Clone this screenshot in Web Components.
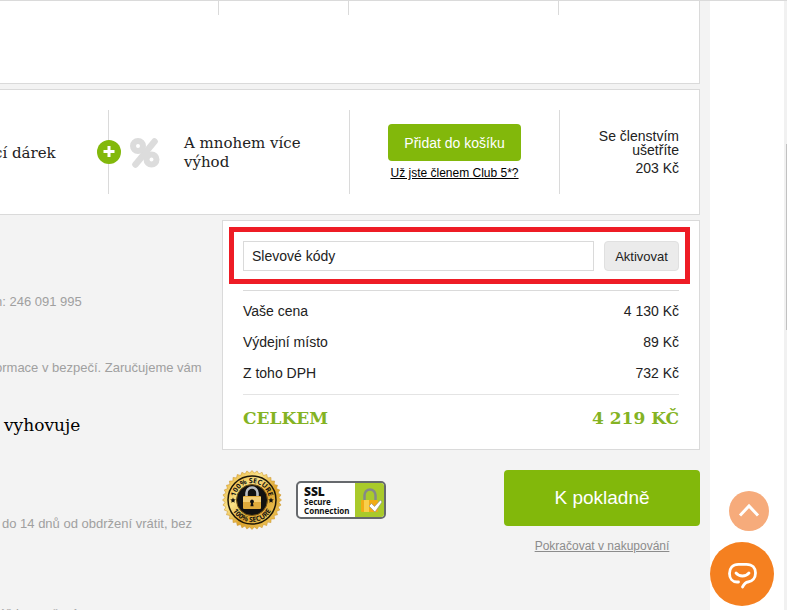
<!DOCTYPE html>
<html lang="cs">
<head>
<meta charset="utf-8">
<title>Košík</title>
<style>
body {
  margin: 0;
  font: 14px/14px "Liberation Sans", Arial, sans-serif;
  color: #222;
  --green: #82b80b;
  --line: #dadada;
  --slab: "Roboto Slab", "DejaVu Serif", serif;
}
</style>
</head>
<body>
<cart-page>
  <shipping-strip></shipping-strip>
  <club-strip>
    <span slot="gift">cí dárek</span>
    <span slot="more">A mnohem více výhod</span>
  </club-strip>
  <help-notes slot="side"></help-notes>
  <cart-summary slot="main"></cart-summary>
  <cart-actions slot="main"></cart-actions>
</cart-page>
<floating-tools></floating-tools>

<script>
class BaseElement extends HTMLElement {
  constructor() {
    super();
    this.shadow = this.attachShadow({ mode: "open" });
  }

  connectedCallback() {
    const tmpl = document.createElement("template");
    tmpl.innerHTML = `<style>* { box-sizing: border-box; }</style>${this.template()}`;
    this.shadow.replaceChildren(tmpl.content.cloneNode(true));
  }
}

class CartPage extends BaseElement {
  template() {
    return `
<style>
:host {
  display: flex;
  height: 100vh;
  overflow: hidden;
  border-top: 1px solid var(--line);
  box-sizing: border-box;
}
main {
  flex: 1;
  min-width: 0;
  padding-right: 10px;
  background: #f3f3f3;
}
.columns {
  display: grid;
  grid-template-columns: minmax(0, 1fr) 478px;
  margin-top: 5px;
}
.gutter {
  width: 74px;
  background: #fff;
}
.track {
  width: 3px;
  padding: 143px 0 0 2px;
  background: #f1f1f1;
}
.thumb {
  height: 186px;
  background: #c1c1c1;
}
</style>
<main>
  <slot></slot>
  <div class="columns">
    <div><slot name="side"></slot></div>
    <div><slot name="main"></slot></div>
  </div>
</main>
<div class="gutter"></div>
<div class="track"><div class="thumb"></div></div>`;
  }
}

class ShippingStrip extends BaseElement {
  template() {
    return `
<style>
:host {
  display: grid;
  grid-template-columns: 1fr 130px 210px 141px;
  height: 83px;
  background: #fff;
  border: solid var(--line);
  border-width: 0 1px 1px 0;
  box-sizing: border-box;
}
i {
  height: 14px;
  border-left: 1px solid var(--line);
}
i:first-of-type {
  border: 0;
}
</style>
<i></i><i></i><i></i><i></i>`;
  }
}

class ClubStrip extends BaseElement {
  template() {
    return `
<style>
:host {
  display: grid;
  grid-template-columns: minmax(0, 1fr) 241px 210px 140px;
  margin-top: 5px;
  padding: 20px 0;
  background: #fff;
  border: 1px solid var(--line);
  border-left: 0;
}
.cell {
  display: flex;
  align-items: center;
  height: 84px;
  border-left: 1px solid var(--line);
  font-size: 14px;
}
.cell.gift {
  border: 0;
  margin-left: -6px;
  padding-top: 2px;
  white-space: nowrap;
}
.slab {
  font: 15px/19px var(--slab);
}
.more {
  position: relative;
  gap: 24px;
  padding: 2px 24px 0 21px;
}
.plus {
  position: absolute;
  left: -12px;
  top: 30px;
}
.percent {
  flex: none;
}
.join {
  flex-direction: column;
  justify-content: center;
  gap: 5px;
}
button {
  height: 37px;
  padding: 0 16px;
  border: 0;
  border-radius: 4px;
  background: var(--green);
  color: #fff;
  font: inherit;
}
a {
  color: #000;
  font-size: 12px;
}
.saving {
  flex-direction: column;
  align-items: flex-end;
  justify-content: center;
  gap: 4px;
  padding-right: 20px;
  text-align: right;
}
</style>
<div class="cell slab gift"><slot name="gift"></slot></div>
<div class="cell slab more">
  <svg class="plus" width="24" height="24" viewBox="0 0 24 24">
    <circle cx="12" cy="12" r="12" fill="#82b80b"/>
    <path d="M12 6v11M6.500 11.500h11" stroke="#fff" stroke-width="3"/>
  </svg>
  <svg class="percent" width="30" height="30" viewBox="0 0 30 30" fill="none" stroke="#dcdcdc">
    <path d="M24.500 3.500 5.500 26.500" stroke-width="6.500" stroke-linecap="round"/>
    <circle cx="8" cy="8" r="5" stroke-width="6"/>
    <circle cx="21.500" cy="21.500" r="5" stroke-width="6"/>
  </svg>
  <slot name="more"></slot>
</div>
<div class="cell join">
  <button type="button">Přidat do košíku</button>
  <a href="#club">Už jste členem Club 5*?</a>
</div>
<div class="cell saving">
  <span>Se členstvím<br>ušetříte</span>
  <span>203 Kč</span>
</div>`;
  }
}

class HelpNotes extends BaseElement {
  template() {
    return `
<style>
:host {
  display: block;
  margin-left: -5px;
  padding-top: 74px;
  color: #a0a0a0;
  font-size: 13px;
  line-height: 16px;
  white-space: nowrap;
}
p, h3 {
  margin: 0 0 50px;
}
h3 {
  margin: 0 0 81px;
  padding-left: 9px;
  color: #000;
  font: 17px/20px var(--slab);
}
.phone + p {
  margin-bottom: 39px;
}
h3 + p {
  padding-left: 7px;
  margin-bottom: 74px;
}
</style>
<p class="phone">n: 246 091 995</p>
<p>ormace v bezpečí. Zaručujeme vám</p>
<h3>vyhovuje</h3>
<p>do 14 dnů od obdržení vrátit, bez</p>
<p>též bez určení</p>`;
  }
}

class CartSummary extends BaseElement {
  rows = [
    ["Vaše cena", "4 130 Kč"],
    ["Výdejní místo", "89 Kč"],
    ["Z toho DPH", "732 Kč"],
  ];

  template() {
    return `
<style>
:host {
  display: block;
  padding: 6px 0 8px;
  background: #fff;
  border: 1px solid var(--line);
}
form {
  display: flex;
  gap: 10px;
  margin: 0 9px 0 6px;
  padding: 9px 6px 8px 9px;
  border: 5px solid #ee1c25;
}
input {
  flex: 1;
  min-width: 0;
  height: 30px;
  padding: 0 8px;
  border: 1px solid var(--line);
  background: #fff;
  color: #222;
  font: inherit;
}
input::placeholder {
  color: #222;
}
button {
  width: 75px;
  height: 30px;
  padding: 0;
  border: 1px solid #e0e0e0;
  border-radius: 4px;
  background: #ebebeb;
  color: #222;
  font: 13px "Liberation Sans", Arial, sans-serif;
}
.prices {
  margin: 6px 20px 0;
  padding-top: 4px;
  border-top: 1px solid var(--line);
}
table {
  width: 100%;
  border-collapse: collapse;
}
th, td {
  height: 31px;
  padding: 0;
  font-size: 14px;
  font-weight: normal;
  text-align: left;
}
td {
  text-align: right;
}
.total {
  display: flex;
  justify-content: space-between;
  align-items: center;
  height: 47px;
  margin-top: 6px;
  border-top: 1px solid #e4e4e4;
  color: #84b323;
  font: bold 17px/24px var(--slab);
}
</style>
<form>
  <input type="text" aria-label="Slevové kódy" placeholder="Slevové kódy">
  <button type="button">Aktivovat</button>
</form>
<div class="prices">
  <table>
    ${this.rows
      .map(([label, price]) => `<tr><th scope="row">${label}</th><td>${price}</td></tr>`)
      .join("\n")}
  </table>
  <div class="total"><span>CELKEM</span><span>4 219 KČ</span></div>
</div>`;
  }
}

class SecureSeal extends BaseElement {
  // Points of the toothed outer rim
  rim(teeth) {
    return Array.from({ length: teeth * 2 }, (_, i) => {
      const r = i % 2 ? 27 : 29.5;
      const a = (i * Math.PI) / teeth;
      return `${(30 + r * Math.cos(a)).toFixed(2)},${(30 + r * Math.sin(a)).toFixed(2)}`;
    }).join(" ");
  }

  template() {
    return `
<style>
:host {
  display: block;
}
svg {
  display: block;
}
text {
  font: bold 7px "Noto Sans", sans-serif;
}
</style>
<svg width="60" height="60" viewBox="0 0 60 60" role="img" aria-label="100% Secure">
  <defs>
    <linearGradient id="gold" x1="0" y1="0" x2="1" y2="1">
      <stop offset="0" stop-color="#e2a92c"/>
      <stop offset=".35" stop-color="#fbe389"/>
      <stop offset=".6" stop-color="#dca32c"/>
      <stop offset="1" stop-color="#f3cf68"/>
    </linearGradient>
    <path id="top" d="M13 30a17 17 0 0 1 34 0"/>
    <path id="bottom" d="M8 30a22 22 0 0 0 44 0"/>
  </defs>
  <polygon points="${this.rim(36)}" fill="url(#gold)" stroke="#c98f22" stroke-width=".5"/>
  <circle cx="30" cy="30" r="24" fill="url(#gold)" stroke="#1c1608" stroke-width="1.500"/>
  <circle cx="30" cy="30" r="15.500" fill="#111" stroke="#7a5714"/>
  <text fill="#111" text-anchor="middle"><textPath href="#top" startOffset="50%">100% SECURE</textPath></text>
  <text fill="#111" text-anchor="middle"><textPath href="#bottom" startOffset="50%">100% SECURE</textPath></text>
  <path id="star" d="M11 27.500l.8 1.800 2 .2-1.500 1.300.4 2-1.700-1-1.700 1 .4-2-1.500-1.300 2-.2zM49 27.500l.8 1.800 2 .2-1.500 1.300.4 2-1.700-1-1.700 1 .4-2-1.500-1.300 2-.2z" fill="#111"/>
  <path d="M24.500 27v-4a5.500 5.500 0 0 1 11 0v4" fill="none" stroke="#b9bcc0" stroke-width="2.600"/>
  <rect x="21" y="26" width="18" height="13" rx="1" fill="#e0ab3c"/>
  <path d="M21 27h18v5H21z" fill="#f4cf76"/>
  <path d="M30 29.500a2 2 0 0 1 1 3.700l.6 3h-3.200l.6-3a2 2 0 0 1 1-3.700z" fill="#111"/>
</svg>`;
  }
}

class SslBadge extends BaseElement {
  template() {
    return `
<style>
:host {
  display: flex;
  width: 90px;
  height: 38px;
  box-sizing: border-box;
  border: 2px solid #66696d;
  border-radius: 5px;
  overflow: hidden;
  background: #fff;
  color: #111;
}
div {
  flex: 1;
  padding: 3px 0 0 6px;
  font: bold 8px/9px "Noto Sans", sans-serif;
  white-space: nowrap;
}
b {
  display: block;
  font-size: 12px;
  line-height: 11px;
}
svg {
  flex: none;
  background: #a9ca2b;
}
</style>
<div><b>SSL</b>Secure<br>Connection</div>
<svg width="29" height="34" viewBox="0 0 29 34">
  <path d="M9.500 18v-6a5.500 5.500 0 0 1 11 0v6" fill="none" stroke="#85888a" stroke-width="2.500"/>
  <rect x="6" y="17" width="17" height="12" rx="1" fill="#f0ac16"/>
  <path d="M9 17h5v12H9z" fill="#f9cf4b"/>
  <path d="M14 23l2.500-2.500 3 3L25.500 17l1.500 2-7 10z" fill="#fff" stroke="#888" stroke-width=".6"/>
</svg>`;
  }
}

class CartActions extends BaseElement {
  template() {
    return `
<style>
:host {
  display: flex;
  justify-content: space-between;
  align-items: flex-start;
  padding-top: 20px;
}
.seals {
  display: flex;
  align-items: center;
  gap: 14px;
}
.next {
  display: flex;
  flex-direction: column;
  align-items: center;
  gap: 13px;
  width: 196px;
}
button {
  width: 100%;
  height: 56px;
  border: 0;
  border-radius: 4px;
  background: var(--green);
  color: #fff;
  font: 19px "Liberation Sans", Arial, sans-serif;
}
a {
  color: #8c8c8c;
  font-size: 12px;
}
</style>
<div class="seals"><secure-seal></secure-seal><ssl-badge></ssl-badge></div>
<div class="next">
  <button type="button">K pokladně</button>
  <a href="#shop">Pokračovat v nakupování</a>
</div>`;
  }
}

class FloatingTools extends BaseElement {
  template() {
    return `
<style>
:host {
  position: fixed;
  right: 13px;
  bottom: 4px;
  display: flex;
  flex-direction: column;
  align-items: flex-end;
  gap: 11px;
}
button {
  padding: 0;
  border: 0;
  border-radius: 50%;
}
svg {
  display: block;
}
.up {
  margin-right: 5px;
  background: #f6ab7b;
}
.chat {
  background: #f58020;
}
</style>
<button class="up" type="button" aria-label="Nahoru">
  <svg width="40" height="40" viewBox="0 0 40 40" fill="none" stroke="#fff" stroke-width="3">
    <path d="M11 24.500l9-9.500 9 9.500"/>
  </svg>
</button>
<button class="chat" type="button" aria-label="Chat">
  <svg width="64" height="64" viewBox="0 0 64 64" fill="none" stroke="#fff" stroke-width="2.800" stroke-linecap="round" stroke-linejoin="round">
    <path d="M28.500 40H27c-4.500 0-7.500-3.500-7.500-8.500 0-5.500 3-9.200 9-9.200h8c6 0 9 3.700 9 8.700S42.500 39.500 38 40c-2.500.3-4 2-5.500 5"/>
    <path d="M26 31c3.500 4 9.500 4 13 0"/>
  </svg>
</button>`;
  }
}

customElements.define("cart-page", CartPage);
customElements.define("shipping-strip", ShippingStrip);
customElements.define("club-strip", ClubStrip);
customElements.define("help-notes", HelpNotes);
customElements.define("cart-summary", CartSummary);
customElements.define("secure-seal", SecureSeal);
customElements.define("ssl-badge", SslBadge);
customElements.define("cart-actions", CartActions);
customElements.define("floating-tools", FloatingTools);
</script>
</body>
</html>
